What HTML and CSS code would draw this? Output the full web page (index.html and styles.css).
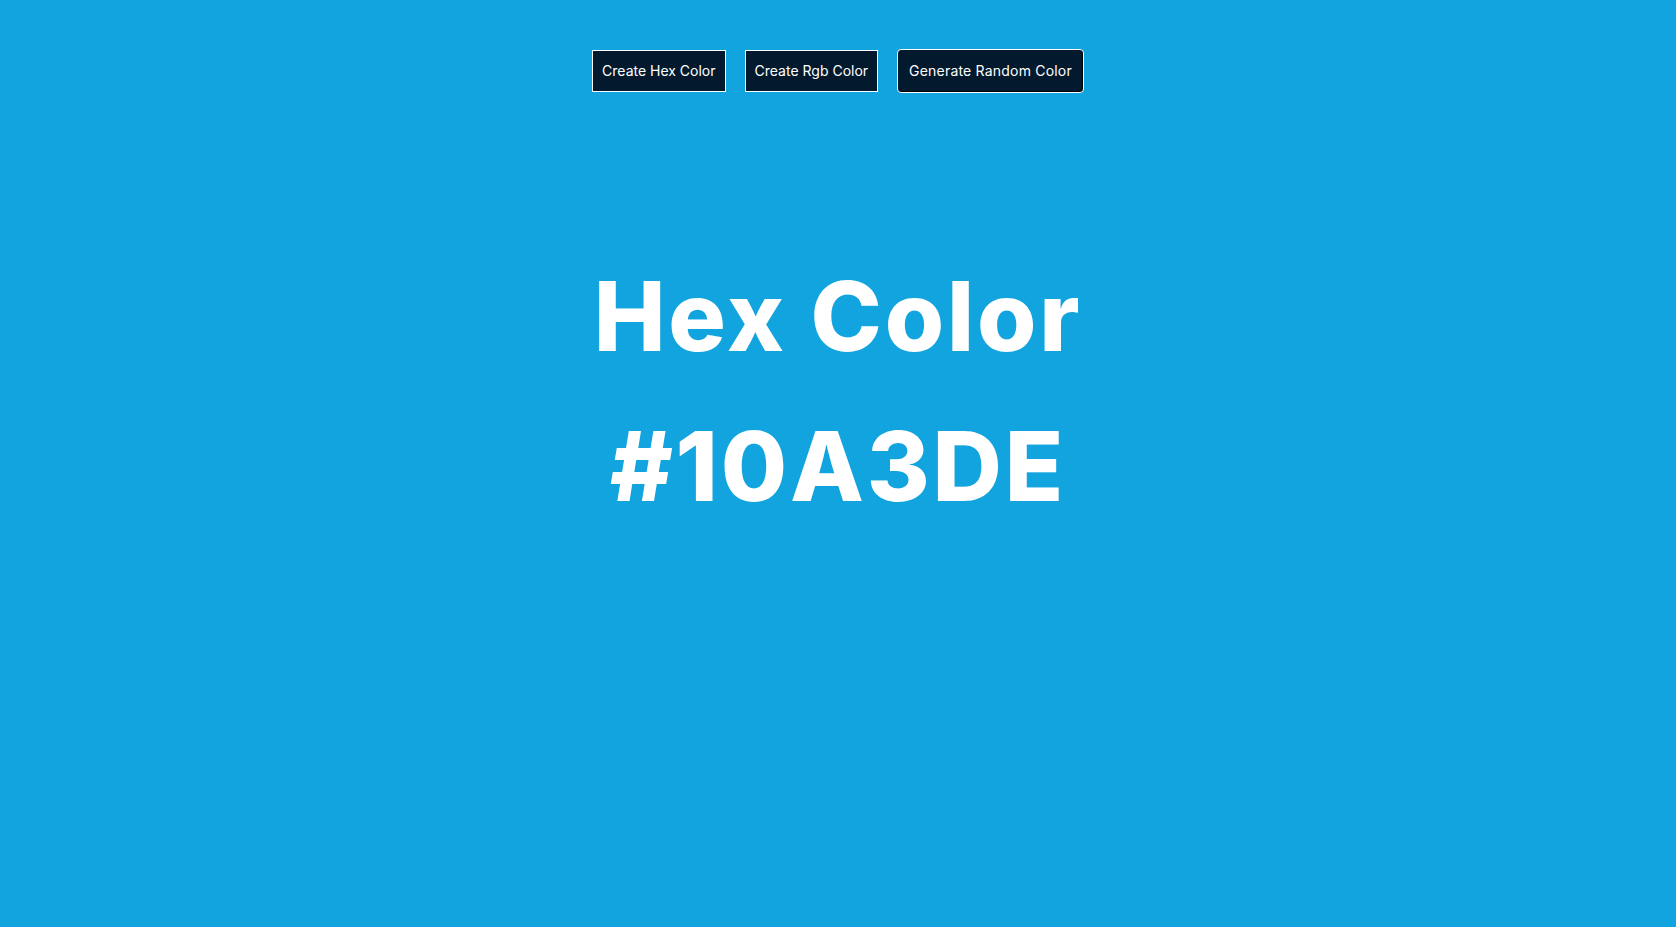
FILE: index.html
```html
<!DOCTYPE html>
<html lang="en">
<head>
<meta charset="utf-8">
<title>Color Generator</title>
<link rel="stylesheet" href="styles.css">
</head>
<body>
<main class="page">
  <nav class="actions">
    <button class="btn">Create Hex Color</button>
    <button class="btn">Create Rgb Color</button>
    <button class="btn btn-round">Generate Random Color</button>
  </nav>
  <section class="display">
    <h1 class="title">Hex Color</h1>
    <h1 class="value">#10A3DE</h1>
  </section>
</main>
</body>
</html>
```
FILE: styles.css
```css
html, body {
  margin: 0;
  padding: 0;
  height: 100%;
}
body {
  background: #12a4de;
  font-family: "Inter", "Open Sans", sans-serif;
  color: #ffffff;
}
.page {
  display: flex;
  flex-direction: column;
  align-items: center;
  padding-top: 49px;
}
.actions {
  display: flex;
  align-items: center;
  gap: 19px;
}
.btn {
  height: 42px;
  padding: 0 9px;
  background: #031a2e;
  color: #ffffff;
  border: 1px solid #ffffff;
  font-family: "Inter", "Open Sans", sans-serif;
  font-size: 14px;
  font-weight: 400;
  line-height: 40px;
  cursor: pointer;
}
.btn-round {
  height: 44px;
  border-radius: 4px;
  padding: 0 11px;
  letter-spacing: 0.2px;
  box-shadow: inset -1px -1px 0 #000000;
}
.display {
  display: flex;
  flex-direction: column;
  align-items: center;
  margin-top: 148px;
}
.title, .value {
  margin: 0;
  font-size: 96px;
  font-weight: 800;
  line-height: 150px;
  letter-spacing: 2.8px;
}
```
